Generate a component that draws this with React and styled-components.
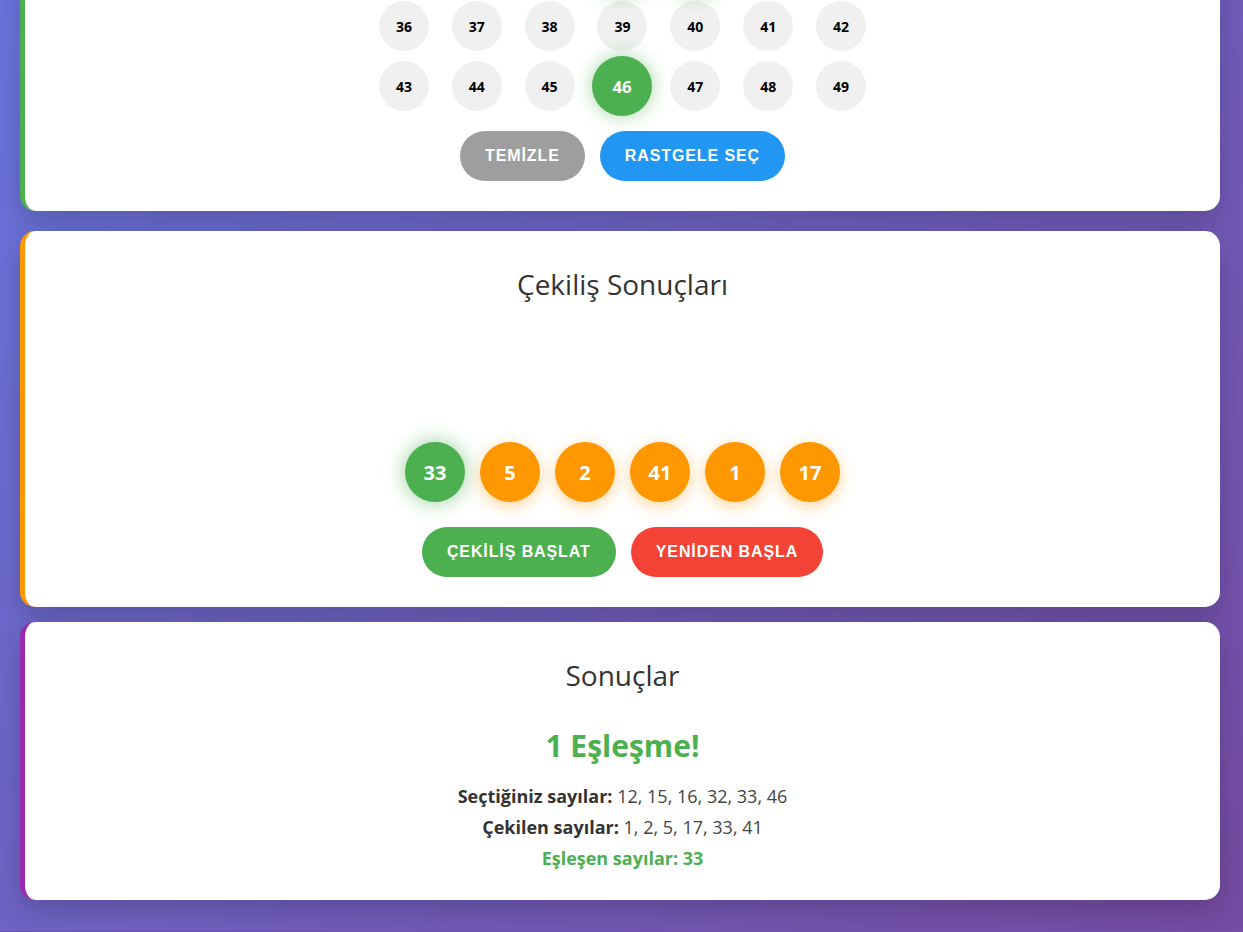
import React from "react";
import styled, { createGlobalStyle, css } from "styled-components";

const GlobalStyle = createGlobalStyle`
    html, body {
        margin: 0;
        padding: 0;
        background: #704fae;
        font-family: "Open Sans", "Noto Sans", sans-serif;
    }
    * {
        box-sizing: border-box;
    }
`;

// the screenshot is taken scrolled down, so the page starts above the viewport
const Page = styled.div`
    margin-top: -447px;
    padding: 20px 20px 31px;
    background: linear-gradient(135deg, #667eea 0%, #764ba2 100%);
`;

const Container = styled.div`
    width: 1200px;
    display: flex;
    flex-direction: column;
`;

const Card = styled.section`
    background: #ffffff;
    border-radius: 15px;
    border-left: 5px solid ${(p) => p.$accent};
    padding: 30px;
    margin-top: ${(p) => p.$gap || 0}px;
    box-shadow: 0 10px 30px rgba(0, 0, 0, 0.2);
    display: flex;
    flex-direction: column;
    align-items: center;
`;

const Title = styled.h2`
    margin: 7px 0 0;
    font-size: 28px;
    line-height: 32px;
    font-weight: 400;
    color: #333;
    text-align: center;
`;

const Hint = styled.p`
    margin: 15px 0 20px;
    font-size: 16px;
    line-height: 24px;
    color: #666;
`;

const Grid = styled.div`
    width: 500px;
    display: grid;
    grid-template-columns: repeat(7, 1fr);
    gap: 10px;
    justify-items: center;
`;

const NumberBall = styled.div`
    width: 50px;
    height: 50px;
    border-radius: 50%;
    background: #f0f0f0;
    color: #000;
    font-size: 14px;
    font-weight: 700;
    display: flex;
    align-items: center;
    justify-content: center;
    ${(p) =>
        p.$selected &&
        css`
            background: #4caf50;
            color: #fff;
            transform: scale(1.2);
            box-shadow: 0 0 15px rgba(76, 175, 80, 0.5);
        `}
`;

const ButtonRow = styled.div`
    display: flex;
    gap: 15px;
    margin-top: ${(p) => p.$top}px;
`;

const Button = styled.button`
    height: 50px;
    padding: 0 25px;
    border: none;
    border-radius: 25px;
    background: ${(p) => p.$color};
    color: #fff;
    font-family: "Liberation Sans", Arial, sans-serif;
    font-size: 16px;
    font-weight: 700;
    letter-spacing: 0.9px;
    text-transform: uppercase;
    cursor: pointer;
`;

const DrawArea = styled.div`
    width: 100%;
    height: 142px;
`;

const DrawRow = styled.div`
    display: flex;
    gap: 15px;
`;

const DrawBall = styled.div`
    width: 60px;
    height: 60px;
    border-radius: 50%;
    background: ${(p) => (p.$match ? "#4caf50" : "#ff9800")};
    color: #fff;
    font-size: 20px;
    font-weight: 700;
    display: flex;
    align-items: center;
    justify-content: center;
    box-shadow: ${(p) =>
        p.$match ? "0 0 20px rgba(76, 175, 80, 0.6)" : "0 4px 15px rgba(255, 152, 0, 0.4)"};
`;

const MatchText = styled.div`
    margin-top: 35px;
    font-size: 30px;
    line-height: 40px;
    font-weight: 700;
    color: #4caf50;
`;

const Details = styled.div`
    margin-top: 18px;
    display: flex;
    flex-direction: column;
    align-items: center;
    gap: 7px;
    font-size: 18px;
    line-height: 24px;
    color: #444;
    b {
        color: #333;
    }
`;

const MatchLine = styled.div`
    color: #4caf50;
    font-weight: 700;
`;

const selected = [12, 15, 16, 32, 33, 46];
const drawn = [33, 5, 2, 41, 1, 17];

const App = () => {
    const numbers = Array.from({ length: 49 }, (_, i) => i + 1);
    const sortedDrawn = [...drawn].sort((a, b) => a - b);
    const matches = selected.filter((n) => drawn.includes(n));

    return (
        <>
            <GlobalStyle />
            <Page>
                <Container>
                    <Card $accent="#4caf50">
                        <Title>Sayılarınızı Seçin</Title>
                        <Hint>1 ile 49 arasında 6 sayı seçin (6/6)</Hint>
                        <Grid>
                            {numbers.map((n) => (
                                <NumberBall key={n} $selected={selected.includes(n)}>
                                    {n}
                                </NumberBall>
                            ))}
                        </Grid>
                        <ButtonRow $top={20}>
                            <Button $color="#9e9e9e">Temİzle</Button>
                            <Button $color="#2196f3">Rastgele Seç</Button>
                        </ButtonRow>
                    </Card>

                    <Card $accent="#ff9800" $gap={20}>
                        <Title>Çekiliş Sonuçları</Title>
                        <DrawArea />
                        <DrawRow>
                            {drawn.map((n) => (
                                <DrawBall key={n} $match={selected.includes(n)}>
                                    {n}
                                </DrawBall>
                            ))}
                        </DrawRow>
                        <ButtonRow $top={25}>
                            <Button $color="#4caf50">Çekİlİş Başlat</Button>
                            <Button $color="#f44336">Yenİden Başla</Button>
                        </ButtonRow>
                    </Card>

                    <Card $accent="#9c27b0" $gap={15}>
                        <Title>Sonuçlar</Title>
                        <MatchText>{matches.length} Eşleşme!</MatchText>
                        <Details>
                            <div>
                                <b>Seçtiğiniz sayılar:</b> {selected.join(", ")}
                            </div>
                            <div>
                                <b>Çekilen sayılar:</b> {sortedDrawn.join(", ")}
                            </div>
                            <MatchLine>Eşleşen sayılar: {matches.join(", ")}</MatchLine>
                        </Details>
                    </Card>
                </Container>
            </Page>
        </>
    );
};

export default App;
